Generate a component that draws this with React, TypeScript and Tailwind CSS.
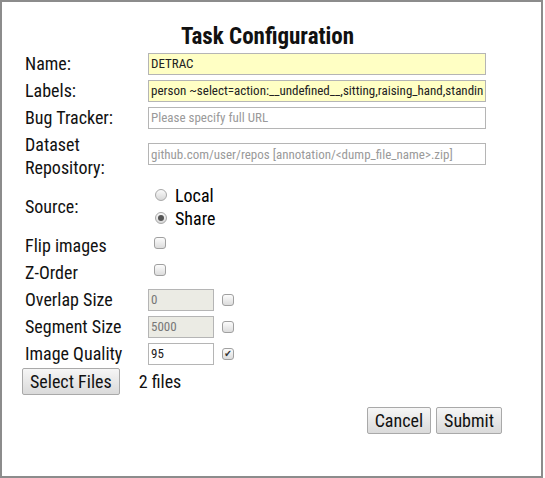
import React from 'react';

const FONT = { fontFamily: '"Roboto Condensed", "Liberation Sans Narrow", "DejaVu Sans Condensed", Roboto, sans-serif' };

function Checkbox({ checked = false }: { checked?: boolean }) {
  return (
    <span className="relative inline-flex h-[12px] w-[12px] items-center justify-center rounded-[3px] border border-[#a0a0a0] bg-gradient-to-b from-[#fcfcfc] to-[#dcdcdc]">
      {checked && <span className="text-[10px] leading-none text-[#333]">✔</span>}
    </span>
  );
}

function Radio({ checked = false }: { checked?: boolean }) {
  return (
    <span className="inline-flex h-[12px] w-[12px] items-center justify-center rounded-full border border-[#a8a8a8] bg-gradient-to-b from-[#fafafa] to-[#d8d8d8]">
      {checked && <span className="h-[6px] w-[6px] rounded-full bg-[#555]" />}
    </span>
  );
}

function Row({ label, children, h = 'h-[27px]' }: { label: React.ReactNode; children?: React.ReactNode; h?: string }) {
  return (
    <div className={`flex items-center ${h}`}>
      <div className="w-[123px] shrink-0 text-[18px] leading-[23px] text-[#111]">{label}</div>
      <div className="flex flex-1 items-center gap-2">{children}</div>
    </div>
  );
}

const inputBase = 'h-[22px] border border-[#b5b5b5] px-[2px] text-[13px] outline-none';

function Button({ children }: { children: React.ReactNode }) {
  return (
    <button className="h-[27px] rounded-[2px] border border-[#a9a9a9] bg-gradient-to-b from-[#f6f6f6] to-[#dadada] px-[7px] text-[18px] leading-none text-[#111]">
      {children}
    </button>
  );
}

export default function App() {
  return (
    <div style={FONT} className="h-[478px] w-[543px] border-2 border-[#8c8c8c] bg-white">
      <div className="pl-[23px] pr-[55px]">
        <h1 className="mt-[22px] h-[26px] pl-[24px] text-center text-[23px] font-bold leading-[26px] text-[#111]">
          Task Configuration
        </h1>

        <Row label="Name:">
          <input readOnly value="DETRAC" className={`${inputBase} w-[338px] bg-[#ffffc4] text-[13.5px] text-[#222]`} />
        </Row>
        <Row label="Labels:">
          <input
            readOnly
            value="person ~select=action:__undefined__,sitting,raising_hand,standing"
            className={`${inputBase} w-[338px] bg-[#ffffc4] text-[#222]`}
          />
        </Row>
        <Row label="Bug Tracker:">
          <input readOnly placeholder="Please specify full URL" className={`${inputBase} w-[338px] bg-white placeholder:text-[#9a9a9a]`} />
        </Row>
        <Row label={<>Dataset<br />Repository:</>} h="h-[50px]">
          <input
            readOnly
            placeholder="github.com/user/repos [annotation/<dump_file_name>.zip]"
            className={`${inputBase} -mt-[4px] w-[338px] bg-white placeholder:text-[#9a9a9a]`}
          />
        </Row>
        <Row label="Source:" h="h-[51px]">
          <div className="flex flex-col pl-[7px]">
            <label className="flex h-[23px] items-center gap-[8px] text-[18px]">
              <Radio />
              Local
            </label>
            <label className="flex h-[23px] items-center gap-[8px] text-[18px]">
              <Radio checked />
              Share
            </label>
          </div>
        </Row>
        <Row label="Flip images">
          <span className="-mt-[3px] pl-[6px]"><Checkbox /></span>
        </Row>
        <Row label="Z-Order">
          <span className="-mt-[3px] pl-[6px]"><Checkbox /></span>
        </Row>
        <Row label="Overlap Size">
          <input readOnly disabled value="0" className={`${inputBase} w-[66px] bg-[#ebebe4] text-[#777]`} />
          <Checkbox />
        </Row>
        <Row label="Segment Size">
          <input readOnly disabled value="5000" className={`${inputBase} w-[66px] bg-[#ebebe4] text-[#777]`} />
          <Checkbox />
        </Row>
        <Row label="Image Quality">
          <input readOnly value="95" className={`${inputBase} w-[66px] bg-white text-[#222]`} />
          <Checkbox checked />
        </Row>

        <div className="-ml-[3px] mt-[1px] flex items-center gap-[19px]">
          <Button>Select Files</Button>
          <span className="text-[18px] text-[#111]">2 files</span>
        </div>

        <div className="-mr-[16px] mt-[12px] flex justify-end gap-[5px]">
          <Button>Cancel</Button>
          <Button>Submit</Button>
        </div>
      </div>
    </div>
  );
}
